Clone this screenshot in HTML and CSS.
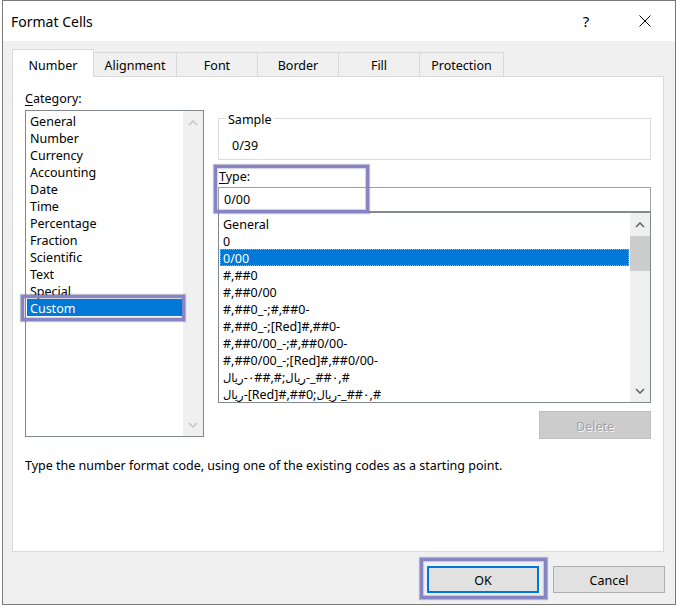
FILE: index.html
```html
<!DOCTYPE html>
<html lang="en">
<head>
<meta charset="utf-8">
<title>Format Cells</title>
<link rel="stylesheet" href="styles.css">
</head>
<body>
<div class="window">
  <div class="titlebar">
    <span class="title">Format Cells</span>
    <span class="help">?</span>
    <span class="close"><svg width="12" height="12" viewBox="0 0 12 12"><path d="M0.5 0.5L11.5 11.5M11.5 0.5L0.5 11.5" stroke="#000" stroke-width="1" fill="none"/></svg></span>
  </div>
  <div class="client">
    <div class="tabs">
      <div class="tab active t-number">Number</div>
      <div class="tab t-align">Alignment</div>
      <div class="tab t-font">Font</div>
      <div class="tab t-border">Border</div>
      <div class="tab t-fill">Fill</div>
      <div class="tab t-prot">Protection</div>
    </div>
    <div class="panel">
      <div class="main">
        <div class="left">
          <div class="label"><u>C</u>ategory:</div>
          <div class="listbox cat">
            <ul class="items">
              <li>General</li>
              <li>Number</li>
              <li>Currency</li>
              <li>Accounting</li>
              <li>Date</li>
              <li>Time</li>
              <li>Percentage</li>
              <li>Fraction</li>
              <li>Scientific</li>
              <li>Text</li>
              <li>Special</li>
              <li class="sel marked">Custom<span class="mark mark-custom"></span></li>
            </ul>
            <div class="vscroll off">
              <div class="arrow"><svg width="10" height="6" viewBox="0 0 10 6"><path d="M1 5L5 1L9 5" stroke="currentColor" stroke-width="1.4" fill="none"/></svg></div>
              <div class="track"></div>
              <div class="arrow"><svg width="10" height="6" viewBox="0 0 10 6"><path d="M1 1L5 5L9 1" stroke="currentColor" stroke-width="1.4" fill="none"/></svg></div>
            </div>
          </div>
        </div>
        <div class="right">
          <fieldset class="sample">
            <legend>Sample</legend>
            <div class="sample-value">0/39</div>
          </fieldset>
          <div class="type-group">
            <div class="label"><u>T</u>ype:</div>
            <div class="input">0/00</div>
            <span class="mark mark-type"></span>
          </div>
          <div class="listbox types">
            <ul class="items">
              <li>General</li>
              <li>0</li>
              <li class="sel focus">0/00</li>
              <li>#,##0</li>
              <li>#,##0/00</li>
              <li>#,##0_-;#,##0-</li>
              <li>#,##0_-;[Red]#,##0-</li>
              <li>#,##0/00_-;#,##0/00-</li>
              <li>#,##0/00_-;[Red]#,##0/00-</li>
              <li><bdi class="ar" dir="rtl">ريال</bdi><bdo dir="ltr">-٠##,#;</bdo><bdi class="ar" dir="rtl">ريال</bdi><bdo dir="ltr">-_##٠,#</bdo></li>
              <li><bdi class="ar" dir="rtl">ريال</bdi><bdo dir="ltr">-[Red]#,##0;</bdo><bdi class="ar" dir="rtl">ريال</bdi><bdo dir="ltr">-_##٠,#</bdo></li>
            </ul>
            <div class="vscroll on">
              <div class="arrow"><svg width="10" height="6" viewBox="0 0 10 6"><path d="M1 5L5 1L9 5" stroke="currentColor" stroke-width="1.5" fill="none"/></svg></div>
              <div class="thumb"></div>
              <div class="track"></div>
              <div class="arrow"><svg width="10" height="6" viewBox="0 0 10 6"><path d="M1 1L5 5L9 1" stroke="currentColor" stroke-width="1.5" fill="none"/></svg></div>
            </div>
          </div>
          <div class="actions">
            <button class="btn disabled" type="button">Delete</button>
          </div>
        </div>
      </div>
      <p class="desc">Type the number format code, using one of the existing codes as a starting point.</p>
    </div>
    <div class="footer">
      <div class="btn-wrap">
        <button class="btn default" type="button">OK</button>
        <span class="mark mark-ok"></span>
      </div>
      <button class="btn" type="button">Cancel</button>
    </div>
  </div>
</div>
</body>
</html>
```

FILE: styles.css
```css
* { box-sizing: border-box; }

html, body {
  margin: 0;
  padding: 0;
  background: #ffffff;
}

body {
  font-family: "Noto Sans", "Open Sans", "DejaVu Sans", sans-serif;
  font-size: 12.5px;
  line-height: 17px;
  color: #000;
}

.window {
  margin-left: 2px;
  width: 674px;
  height: 605px;
  border: 1px solid #7a7a7a;
  background: #f0f0f0;
  display: flex;
  flex-direction: column;
}

/* ---------- title bar ---------- */
.titlebar {
  height: 40px;
  flex: none;
  background: #ffffff;
  display: flex;
  align-items: center;
  padding-left: 8px;
}

.title {
  flex: 1;
  font-size: 14px;
}

.help {
  width: 46px;
  text-align: center;
  font-size: 15px;
}

.close {
  width: 46px;
  margin-left: 13px;
  margin-right: 7px;
  display: flex;
  justify-content: center;
  align-items: center;
}

/* ---------- client ---------- */
.client {
  flex: 1;
  display: flex;
  flex-direction: column;
  padding: 8px 11px 0 9px;
}

.tabs {
  height: 27px;
  display: flex;
  align-items: flex-end;
}

.tab {
  height: 24px;
  border: 1px solid #d9d9d9;
  border-bottom: none;
  background: #f0f0f0;
  margin-left: -1px;
  text-align: center;
  line-height: 26px;
}

.tab.active {
  position: relative;
  z-index: 1;
  height: 28px;
  margin-bottom: -1px;
  margin-left: 0;
  background: #ffffff;
  line-height: 31px;
}

.t-number { width: 82px; }
.t-align  { width: 84px; }
.t-font   { width: 82px; }
.t-border { width: 82px; }
.t-fill   { width: 82px; }
.t-prot   { width: 85px; }

.panel {
  height: 476px;
  flex: none;
  background: #ffffff;
  border: 1px solid #d9d9d9;
  padding: 12px 11px 0 12px;
}

.main {
  display: grid;
  grid-template-columns: 179px 433px;
  column-gap: 14px;
  align-items: start;
}

.label {
  height: 17px;
  line-height: 19px;
}
.label u { text-decoration-thickness: 1px; text-underline-offset: 2px; }

.left .label { margin-bottom: 4px; }

/* ---------- list boxes ---------- */
.listbox {
  display: flex;
  border: 1px solid #828790;
  background: #ffffff;
}

.items {
  list-style: none;
  margin: 0;
  flex: 1;
  min-width: 0;
}

.items li {
  height: 17px;
  line-height: 19px;
  padding-left: 3px;
  white-space: nowrap;
}

.items li.sel {
  background: #0078d7;
  color: #ffffff;
}

.items li.focus {
  outline: 1px dotted #e8a040;
  outline-offset: -1px;
}

.cat {
  height: 327px;
}

.cat .items {
  padding: 1px 1px 0 1px;
}

.types {
  height: 191px;
}

.types .items {
  padding: 2px 1px 0 1px;
  overflow: hidden;
}

.ar {
  font-family: "DejaVu Sans", sans-serif;
  font-size: 11.5px;
}

.vscroll {
  width: 20px;
  flex: none;
  background: #f0f0f0;
  display: flex;
  flex-direction: column;
}

.vscroll .arrow {
  height: 23px;
  flex: none;
  display: flex;
  align-items: center;
  justify-content: center;
}

.vscroll .arrow svg { display: block; }

.vscroll .track { flex: 1; }

.vscroll.off { color: #c2c2c2; }
.vscroll.on { color: #606060; }

.vscroll .thumb {
  height: 35px;
  flex: none;
  background: #cdcdcd;
}

/* ---------- right column ---------- */
.right {
  padding-top: 21px;
  display: flex;
  flex-direction: column;
}

.sample {
  margin: 0;
  border: 1px solid #dcdcdc;
  padding: 10px 0 5px 7px;
  min-width: 0;
}

.sample legend {
  padding: 0 2px;
  line-height: 19px;
  height: 17px;
}

.sample-value {
  padding-left: 6px;
}

.type-group {
  position: relative;
  margin-top: 7px;
}

.type-group .label {
  padding-left: 1px;
  margin-bottom: 3px;
}

.input {
  height: 25px;
  border: 1px solid #a0a0a0;
  border-bottom-color: #8c8c8c;
  padding: 3px 0 0 5px;
  background: #ffffff;
}

.actions {
  margin-top: 8px;
  display: flex;
  justify-content: flex-end;
}

.desc {
  margin: 18px 0 0 0;
}

/* ---------- buttons ---------- */
.btn {
  font: inherit;
  width: 112px;
  height: 27px;
  border: 1px solid #adadad;
  background: #e1e1e1;
  color: #000;
  padding: 2px 0 0 0;
  margin: 0;
}

.btn.disabled {
  height: 28px;
  background: #cccccc;
  border-color: #bfbfbf;
  color: #a3a3a3;
  text-shadow: 1px 1px 0 rgba(255, 255, 255, 0.85);
}

.btn.default {
  border: 2px solid #0078d7;
}

.footer {
  flex: 1;
  display: flex;
  justify-content: flex-end;
  align-items: flex-start;
  gap: 14px;
  padding-top: 14px;
  margin-right: -1px;
}

.btn-wrap {
  position: relative;
  display: flex;
}

/* ---------- annotation highlights ---------- */
.marked { position: relative; }

.mark {
  position: absolute;
  z-index: 2;
  border: 3px solid #8784c4;
  box-shadow: 0 0 1px 1px rgba(70, 66, 130, 0.35), inset 0 0 1px 1px rgba(70, 66, 130, 0.25);
  pointer-events: none;
}

.mark-custom {
  top: -4px;
  left: -6px;
  right: -3px;
  bottom: -5px;
}

.mark-type {
  top: -2px;
  left: -4px;
  width: 155px;
  height: 48px;
}

.mark-ok {
  top: -8px;
  left: -7px;
  right: -8px;
  bottom: -6px;
}
```
